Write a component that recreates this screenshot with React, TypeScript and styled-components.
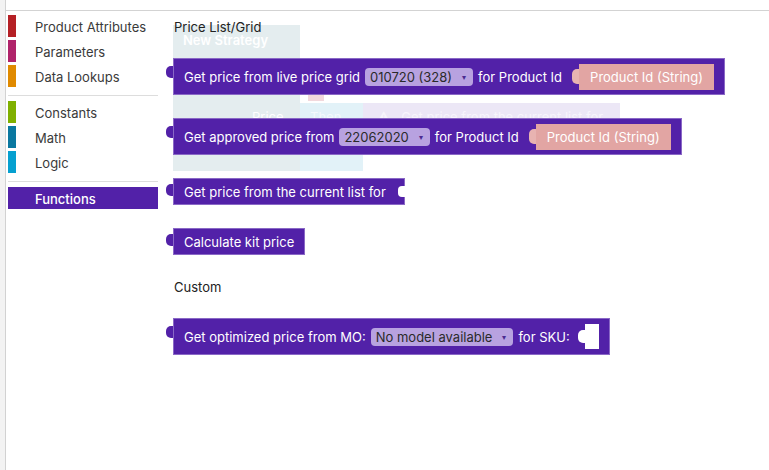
import React from "react";
import styled, { createGlobalStyle } from "styled-components";

const Global = createGlobalStyle`
  html, body { margin: 0; padding: 0; background: #fff; }
  body { font-family: Inter, "Noto Sans", sans-serif; overflow: hidden; }
`;

const Page = styled.div`
  display: flex;
  width: 769px;
  height: 470px;
`;

const LeftEdge = styled.div`
  width: 5px;
  background: #f3f3f3;
  border-right: 1px solid #d2d2d2;
`;

const Main = styled.div`
  flex: 1;
  display: flex;
  flex-direction: column;
`;

const TopBar = styled.div`
  height: 10px;
  border-bottom: 1px solid #d3d3d3;
`;

const Body = styled.div`
  flex: 1;
  display: flex;
`;

const Sidebar = styled.div`
  width: 150px;
  margin-left: 2px;
  padding-top: 4px;
  display: flex;
  flex-direction: column;
`;

const Category = styled.div<{ $color: string; $selected?: boolean }>`
  height: 22px;
  margin-bottom: 3px;
  display: flex;
  align-items: center;
  gap: 19px;
  font-size: 13px;
  color: ${(p) => (p.$selected ? "#fff" : "#3a3a3a")};
  font-weight: ${(p) => (p.$selected ? 500 : 400)};
  background: ${(p) => (p.$selected ? p.$color : "transparent")};
  &::before {
    content: "";
    align-self: stretch;
    width: 8px;
    background: ${(p) => p.$color};
  }
`;

const CategoryText = styled.span`
  padding-top: 2px;
`;

const Separator = styled.div`
  height: 1px;
  background: #dddddd;
  margin: 5px 0 5px;
`;

const Flyout = styled.div`
  position: relative;
  flex: 1;
  padding: 9px 0 0 15px;
  display: flex;
  flex-direction: column;
  gap: 23px;
`;

const Backdrop = styled.div`
  position: absolute;
  inset: 0;
  z-index: 0;
  pointer-events: none;
`;

const Ghost = styled.div<{ $bg: string }>`
  position: absolute;
  background: ${(p) => p.$bg};
`;

const GhostText = styled.span<{ $color: string; $bold?: boolean }>`
  position: absolute;
  font-size: 13px;
  white-space: nowrap;
  color: ${(p) => p.$color};
  font-weight: ${(p) => (p.$bold ? 600 : 400)};
`;

const Label = styled.div<{ $pushed?: boolean }>`
  position: relative;
  z-index: 1;
  height: 15px;
  line-height: 15px;
  margin-top: ${(p) => (p.$pushed ? 2 : 0)}px;
  font-size: 13px;
  color: #222;
  padding-left: 1px;
`;

const Block = styled.div<{ $tall?: boolean; $notch?: boolean }>`
  position: relative;
  z-index: 1;
  align-self: flex-start;
  display: inline-flex;
  align-items: center;
  gap: 5px;
  box-sizing: border-box;
  height: ${(p) => (p.$tall ? 37 : 27)}px;
  padding: 0 ${(p) => (p.$notch ? 18 : 10)}px 0 10px;
  background: #5221a8;
  border: 1px solid #8a68c6;
  color: #fff;
  font-size: 13px;
  white-space: nowrap;
  &::before {
    content: "";
    position: absolute;
    left: -8px;
    top: ${(p) => (p.$tall ? 7 : 5)}px;
    width: 7px;
    height: 12px;
    background: #5221a8;
    border-radius: 5px 0 0 5px;
  }
  ${(p) =>
    p.$notch
      ? `&::after {
    content: "";
    position: absolute;
    right: -1px;
    top: 7px;
    width: 7px;
    height: 11px;
    background: #fff;
    border-radius: 4px 0 0 4px;
  }`
      : ""}
`;

const Dropdown = styled.span`
  display: inline-flex;
  align-items: center;
  gap: 10px;
  height: 18px;
  padding: 0 7px 0 5px;
  border-radius: 4px;
  background: #b8a2e0;
  color: #2a2a2a;
  font-size: 13px;
  &::after {
    content: "▾";
    font-size: 8px;
    color: #4b2a90;
  }
`;

const ValuePill = styled.span`
  position: relative;
  display: inline-flex;
  align-items: center;
  height: 26px;
  padding: 0 11px;
  margin-left: 12px;
  background: #e2a5a3;
  color: #fff;
  font-size: 13px;
  &::before {
    content: "";
    position: absolute;
    left: -7px;
    top: 5px;
    width: 7px;
    height: 15px;
    background: #e8b3b1;
    border-radius: 5px 0 0 5px;
  }
`;

const Slot = styled.span`
  position: relative;
  width: 14px;
  height: 25px;
  margin-left: 10px;
  background: #fff;
  &::before {
    content: "";
    position: absolute;
    left: -7px;
    top: 6px;
    width: 7px;
    height: 13px;
    background: #fff;
    border-radius: 5px 0 0 5px;
  }
`;

const categories = [
  { name: "Product Attributes", color: "#b52025" },
  { name: "Parameters", color: "#b0236a" },
  { name: "Data Lookups", color: "#e08a00" },
];
const categories2 = [
  { name: "Constants", color: "#80b000" },
  { name: "Math", color: "#0a78a0" },
  { name: "Logic", color: "#05a0d0" },
];

export default function App() {
  return (
    <>
      <Global />
      <Page>
        <LeftEdge />
        <Main>
          <TopBar />
          <Body>
            <Sidebar>
              {categories.map((c) => (
                <Category key={c.name} $color={c.color}>
                  <CategoryText>{c.name}</CategoryText>
                </Category>
              ))}
              <Separator />
              {categories2.map((c) => (
                <Category key={c.name} $color={c.color}>
                  <CategoryText>{c.name}</CategoryText>
                </Category>
              ))}
              <Separator />
              <Category $color="#5221a8" $selected>
                <CategoryText>Functions</CategoryText>
              </Category>
            </Sidebar>
            <Flyout>
              <Backdrop>
                <Ghost $bg="#e4edef" style={{ left: 15, top: 14, width: 127, height: 146 }} />
                <Ghost $bg="#e2f2f8" style={{ left: 142, top: 92, width: 63, height: 68 }} />
                <Ghost $bg="#ece7f6" style={{ left: 205, top: 92, width: 257, height: 30 }} />
                <Ghost $bg="#f2d8dc" style={{ left: 150, top: 84, width: 16, height: 6 }} />
                <GhostText $color="#ffffff" $bold style={{ left: 25, top: 21 }}>
                  New Strategy
                </GhostText>
                <GhostText $color="#ffffff" style={{ left: 94, top: 98 }}>
                  Price
                </GhostText>
                <GhostText $color="#f4fafd" style={{ left: 152, top: 98 }}>
                  Then
                </GhostText>
                <GhostText $color="#f7f5fc" style={{ left: 219, top: 98 }}>
                  ⚠&nbsp;&nbsp;&nbsp;Get price from the current list for
                </GhostText>
              </Backdrop>
              <Label>Price List/Grid</Label>
              <Block $tall>
                Get price from live price grid
                <Dropdown>010720 (328)</Dropdown>
                for Product Id
                <ValuePill>Product Id (String)</ValuePill>
              </Block>
              <Block $tall>
                Get approved price from
                <Dropdown>22062020</Dropdown>
                for Product Id
                <ValuePill>Product Id (String)</ValuePill>
              </Block>
              <Block $notch>Get price from the current list for</Block>
              <Block>Calculate kit price</Block>
              <Label $pushed>Custom</Label>
              <Block $tall>
                Get optimized price from MO:
                <Dropdown>No model available</Dropdown>
                for SKU:
                <Slot />
              </Block>
            </Flyout>
          </Body>
        </Main>
      </Page>
    </>
  );
}
